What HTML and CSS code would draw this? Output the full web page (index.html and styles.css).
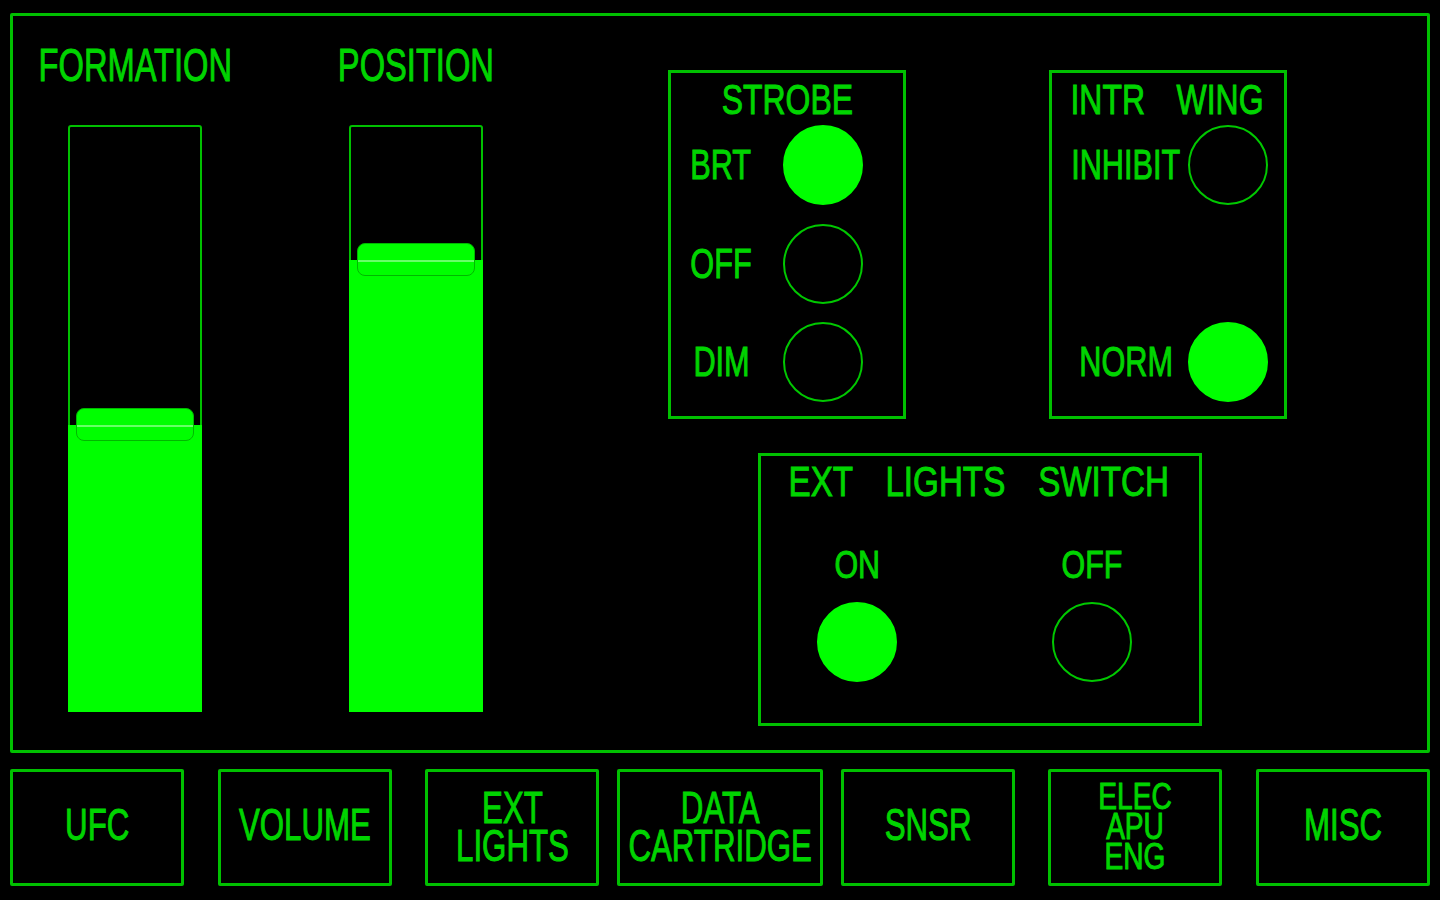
FILE: index.html
```html
<!DOCTYPE html>
<html lang="en">
<head>
  <meta charset="UTF-8">
  <title>EXT LIGHTS</title>
  <link rel="stylesheet" href="styles.css">
</head>
<body>
  <div class="main">
    <div class="slider first">
      <div class="slider-name"><span>FORMATION</span></div>
      <div class="track">
        <div class="fill" style="height: 287px"><div class="handle"></div></div>
      </div>
    </div>
    <div class="slider">
      <div class="slider-name"><span>POSITION</span></div>
      <div class="track">
        <div class="fill" style="height: 452px"><div class="handle"></div></div>
      </div>
    </div>

    <div class="right">
      <div class="top-row">
        <div class="box strobe">
          <div class="box-title"><span>STROBE</span></div>
          <div class="rows">
            <div class="opt"><span>BRT</span></div>
            <div class="lamp on"></div>
            <div class="opt"><span>OFF</span></div>
            <div class="lamp"></div>
            <div class="opt"><span>DIM</span></div>
            <div class="lamp"></div>
          </div>
        </div>
        <div class="box intr">
          <div class="box-title"><span>INTR WING</span></div>
          <div class="rows">
            <div class="opt"><span>INHIBIT</span></div>
            <div class="lamp"></div>
            <div class="opt"></div>
            <div></div>
            <div class="opt"><span>NORM</span></div>
            <div class="lamp on"></div>
          </div>
        </div>
      </div>
      <div class="box switch">
        <div class="box-title"><span>EXT LIGHTS SWITCH</span></div>
        <div class="switch-cols">
          <div class="switch-col">
            <div class="switch-name"><span>ON</span></div>
            <div class="lamp on"></div>
          </div>
          <div class="switch-col">
            <div class="switch-name"><span>OFF</span></div>
            <div class="lamp"></div>
          </div>
        </div>
      </div>
    </div>
  </div>

  <div class="pages">
    <div class="page"><span>UFC</span></div>
    <div class="page"><span>VOLUME</span></div>
    <div class="page two"><span>EXT<br>LIGHTS</span></div>
    <div class="page two wide"><span>DATA<br>CARTRIDGE</span></div>
    <div class="page"><span>SNSR</span></div>
    <div class="page three"><span>ELEC<br>APU<br>ENG</span></div>
    <div class="page"><span>MISC</span></div>
  </div>
</body>
</html>
```

FILE: styles.css
```css
body {
  margin: 0;
  background: #000;
  color: #00d400;
  font-family: 'Liberation Sans', Arial, sans-serif;
  width: 1440px;
  height: 900px;
  overflow: hidden;
}

span {
  display: inline-block;
  white-space: nowrap;
  -webkit-text-stroke: 1px #00d400;
}

.main {
  box-sizing: border-box;
  height: 740px;
  margin: 13px 10px 0;
  border: 3px solid #00c000;
  border-radius: 2px;
  display: flex;
  align-items: flex-start;
}

/* sliders */
.slider {
  width: 200px;
  display: flex;
  flex-direction: column;
  align-items: center;
  margin-left: 81px;
}

.slider.first {
  margin-left: 22px;
}

.slider-name {
  margin-top: 26px;
  font-size: 46px;
  line-height: 1;
}

.slider-name span {
  transform: scaleX(0.71);
}

.track {
  position: relative;
  box-sizing: border-box;
  width: 134px;
  height: 587px;
  margin-top: 37px;
  border: 2px solid #00c000;
  border-radius: 3px;
}

.fill {
  position: absolute;
  left: -2px;
  right: -2px;
  bottom: -2px;
  background: #00ff00;
}

.handle {
  position: absolute;
  top: -17px;
  left: 8px;
  right: 8px;
  height: 33px;
  box-sizing: border-box;
  background: #00ff00;
  border: 1px solid #00b800;
  border-radius: 8px;
}

.handle::after {
  content: "";
  position: absolute;
  left: 0;
  right: 0;
  top: 16px;
  height: 2px;
  background: rgba(190, 255, 190, 0.55);
}

/* right side panels */
.right {
  margin-left: 152px;
  margin-top: 54px;
  display: flex;
  flex-direction: column;
}

.top-row {
  display: flex;
  gap: 143px;
}

.box {
  box-sizing: border-box;
  border: 3px solid #00c000;
}

.box-title {
  display: flex;
  justify-content: center;
  font-size: 42px;
  line-height: 1;
  word-spacing: 30px;
}

.box-title span {
  transform: scaleX(0.76);
}

.strobe,
.intr {
  width: 238px;
  height: 349px;
  padding-top: 6px;
}

.intr .box-title {
  padding-right: 3px;
}

.rows {
  display: grid;
  grid-template-rows: repeat(3, 80px);
  row-gap: 18.5px;
  align-items: center;
  margin-top: 4px;
}

.strobe .rows {
  grid-template-columns: 100px 80px;
  column-gap: 12px;
}

.intr .rows {
  grid-template-columns: 120px 80px;
  column-gap: 2px;
  padding-left: 14px;
}

.opt {
  display: flex;
  justify-content: center;
  font-size: 42px;
  line-height: 1;
}

.opt span {
  transform: scaleX(0.73);
}

.lamp {
  box-sizing: border-box;
  width: 80px;
  height: 80px;
  border: 2.5px solid #00c800;
  border-radius: 50%;
}

.lamp.on {
  background: #00ff00;
  border-color: #00ff00;
}

.switch {
  width: 444px;
  height: 273px;
  margin-top: 34px;
  margin-left: 90px;
  padding-top: 5px;
}

.switch .box-title {
  padding-right: 3px;
}

.switch .box-title span {
  transform: scaleX(0.79);
}

.switch-cols {
  display: flex;
  gap: 75px;
  padding-left: 16px;
  margin-top: 42px;
}

.switch-col {
  width: 160px;
  display: flex;
  flex-direction: column;
  align-items: center;
}

.switch-name {
  display: flex;
  justify-content: center;
  font-size: 39px;
  line-height: 1;
  margin-bottom: 18px;
}

.switch-name span {
  transform: scaleX(0.78);
}

/* page buttons */
.pages {
  display: flex;
  justify-content: space-between;
  margin: 16px 10px 0;
}

.page {
  box-sizing: border-box;
  width: 174px;
  height: 117px;
  border: 3px solid #00c000;
  border-radius: 2px;
  display: flex;
  align-items: center;
  justify-content: center;
  padding-bottom: 6px;
  font-size: 44px;
  line-height: 1;
  text-align: center;
}

.page span {
  transform: scaleX(0.71);
}

.page.two {
  line-height: 38px;
  padding-bottom: 2px;
}

.page.wide {
  width: 206px;
  margin: 0 -16px;
}

.page.three {
  font-size: 36px;
  line-height: 30px;
  padding-bottom: 2px;
}

.page.three span {
  transform: scaleX(0.78);
}
```
